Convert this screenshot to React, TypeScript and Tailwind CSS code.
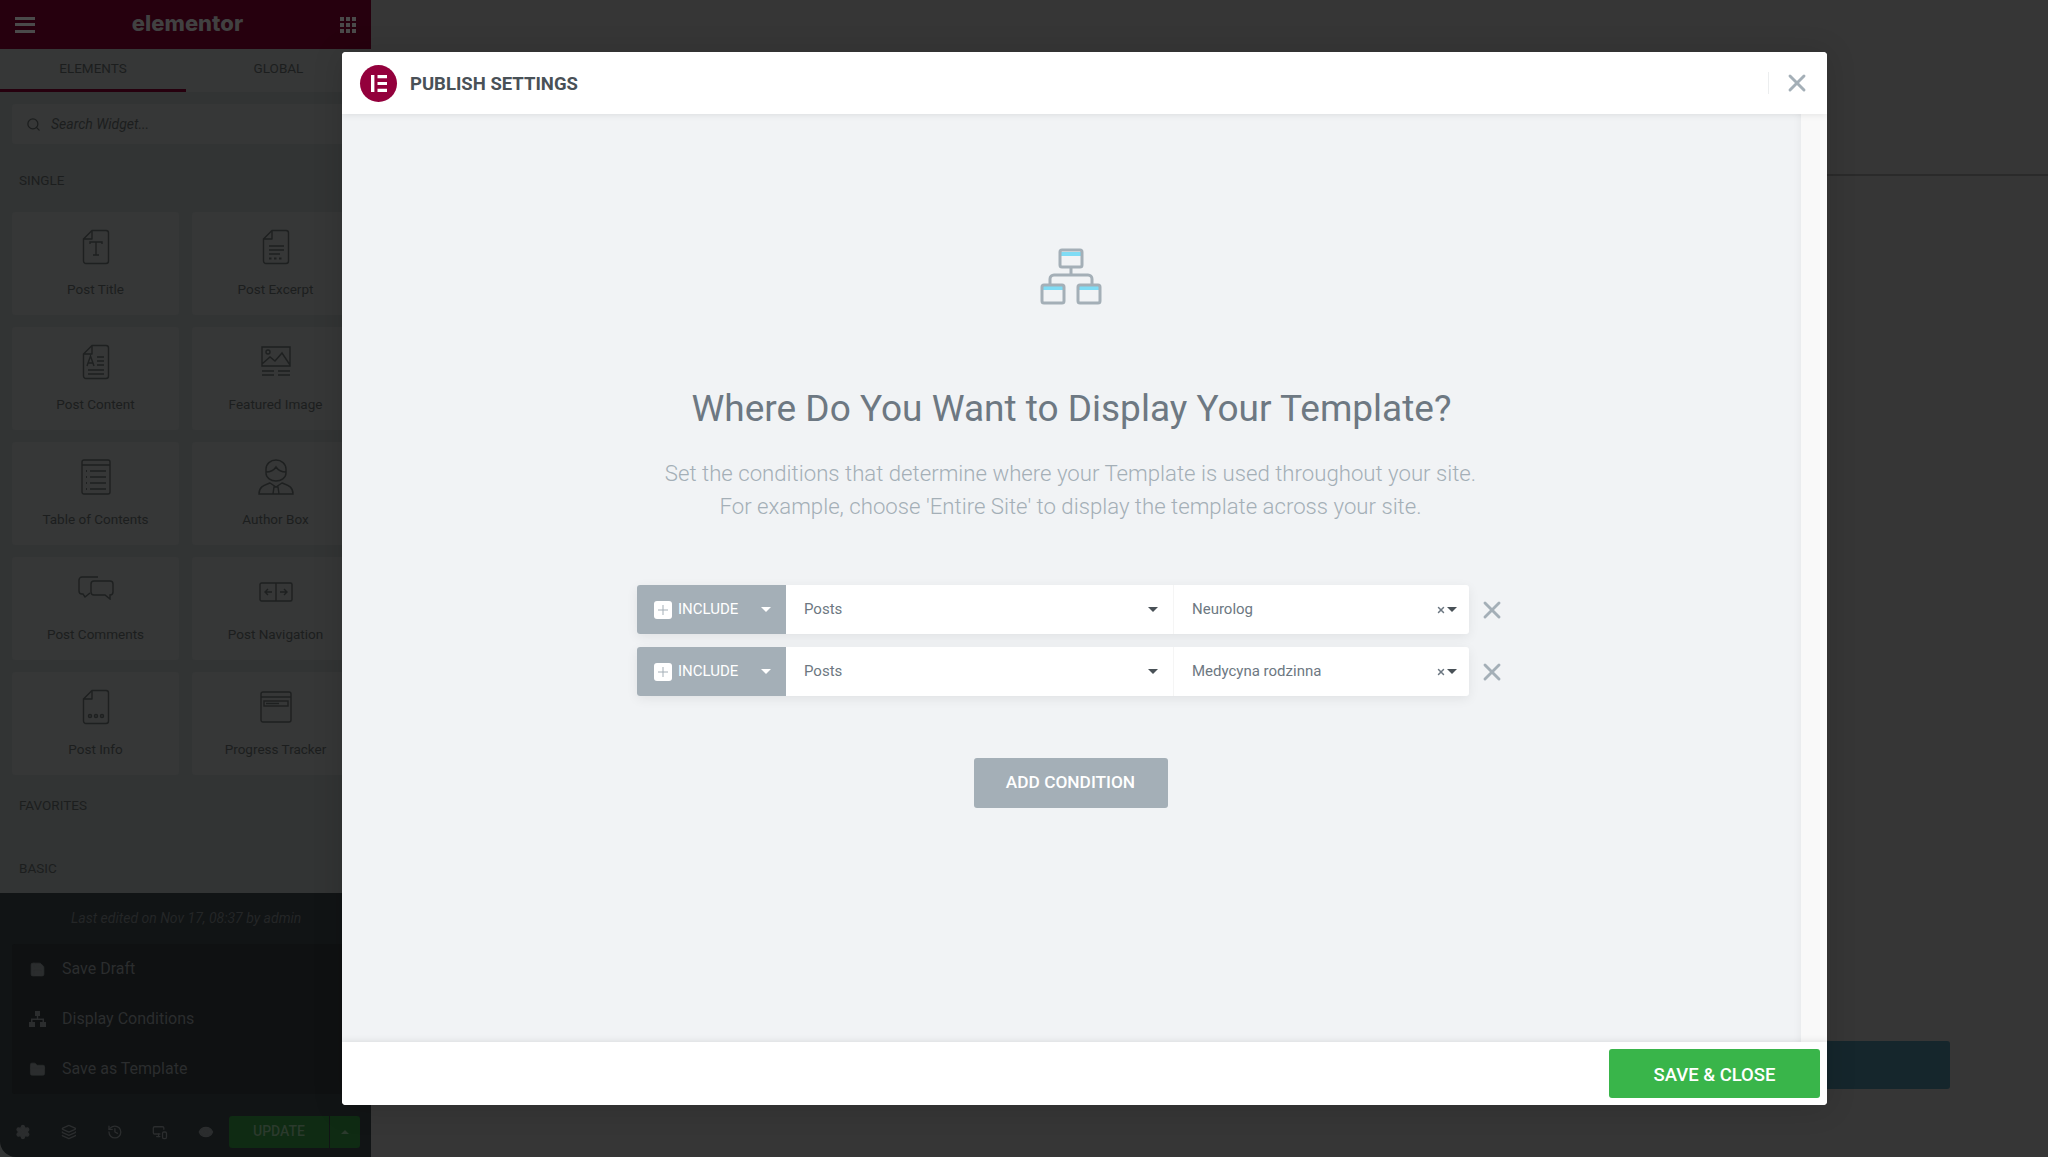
import React from 'react';
import { Eye, FolderClosed, History, Layers, MonitorSmartphone, Save, Search, Settings, X } from 'lucide-react';

const font = 'font-["Roboto",sans-serif]';

const FileShape = ({ children }: { children?: React.ReactNode }) => (
  <svg width="28" height="36" viewBox="0 0 28 36" fill="none" stroke="#1e2020" strokeWidth="1.4">
    <path d="M10 1.5h14a2.5 2.5 0 0 1 2.5 2.5v28a2.5 2.5 0 0 1-2.5 2.5H4A2.500 2.500 0 0 1 1.500 32V10zM10 1.500V10H1.500" strokeLinejoin="round" />
    {children}
  </svg>
);

const icons: Record<string, React.ReactNode> = {
  'Post Title': (
    <FileShape>
      <path d="M8 15v-2h12v2M14 13v13M11 26h6" />
    </FileShape>
  ),
  'Post Excerpt': (
    <FileShape>
      <path d="M7 17h15M7 21h15M7 25h11" />
      <path d="M7 29.500h2.500M12 29.500h2.500M17 29.500h2.500" strokeWidth="1.800" />
    </FileShape>
  ),
  'Post Content': (
    <FileShape>
      <path d="M5 22l3.500-10 3.500 10M6 19h5M15 13h7M15 17h7M15 21h7M6 26h16M6 30h16" />
    </FileShape>
  ),
  'Featured Image': (
    <svg width="30" height="32" viewBox="0 0 30 32" fill="none" stroke="#1e2020" strokeWidth="1.400">
      <path d="M1 1h28v19H1zM1 18l8-7 5 4 7-8 8 12" />
      <circle cx="7" cy="6" r="2" />
      <path d="M1 25h12M17 25h12M1 29h12M17 29h12" />
    </svg>
  ),
  'Table of Contents': (
    <svg width="30" height="36" viewBox="0 0 30 36" fill="none" stroke="#1e2020" strokeWidth="1.400">
      <rect x="1" y="1" width="28" height="34" rx="2" />
      <path d="M1 6h28M9 12h16M9 18h16M9 24h16M9 30h16" />
      <path d="M5 12h1M5 18h1M5 24h1M5 30h1" strokeWidth="2.200" />
    </svg>
  ),
  'Author Box': (
    <svg width="36" height="36" viewBox="0 0 36 36" fill="none" stroke="#1e2020" strokeWidth="1.400">
      <path d="M8 10a10 9 0 0 1 20 0v4c0 5-5 8-10 8s-10-3-10-8zM8 13c4 0 8-2 10-5 2 3 6 5 10 5" />
      <path d="M1 35c0-8 6-9 11-11l6 4 6-4c5 2 11 3 11 11zM16 28h4l1 7h-6z" />
    </svg>
  ),
  'Post Comments': (
    <svg width="36" height="24" viewBox="0 0 36 24" fill="none" stroke="#1e2020" strokeWidth="1.400" className="mb-[7px]">
      <path d="M20 1H4a3 3 0 0 0-3 3v11a3 3 0 0 0 3 3h1l2 3 5-4" />
      <path d="M16 5h16a3 3 0 0 1 3 3v8a3 3 0 0 1-3 3v4l-5-4H16a3 3 0 0 1-3-3V8a3 3 0 0 1 3-3z" />
    </svg>
  ),
  'Post Navigation': (
    <svg width="34" height="20" viewBox="0 0 34 20" fill="none" stroke="#1e2020" strokeWidth="1.400">
      <rect x="1" y="1" width="32" height="18" rx="1.500" />
      <path d="M17 1v18M13 10H6M9 7l-3 3 3 3M21 10h7M25 7l3 3-3 3" />
    </svg>
  ),
  'Post Info': (
    <FileShape>
      <circle cx="8" cy="27" r="1.500" />
      <circle cx="14" cy="27" r="1.500" />
      <circle cx="20" cy="27" r="1.500" />
    </FileShape>
  ),
  'Progress Tracker': (
    <svg width="32" height="32" viewBox="0 0 32 32" fill="none" stroke="#1e2020" strokeWidth="1.400">
      <rect x="1" y="1" width="30" height="30" rx="2" />
      <path d="M1 6h30" />
      <rect x="4" y="10" width="24" height="5" />
      <path d="M6 12.500h13" />
    </svg>
  ),
};

const widgets = [
  'Post Title',
  'Post Excerpt',
  'Post Content',
  'Featured Image',
  'Table of Contents',
  'Author Box',
  'Post Comments',
  'Post Navigation',
  'Post Info',
  'Progress Tracker',
];

function Sidebar() {
  return (
    <div className={`flex h-full w-[371px] shrink-0 flex-col bg-[#323434] ${font}`}>
      <div className="flex h-[49px] shrink-0 items-center justify-between bg-[#26000e] pl-[15px] pr-[15px]">
        <div className="flex w-[20px] flex-col gap-[3.500px]">
          <span className="h-[3px] bg-[#4a4a4a]" />
          <span className="h-[3px] bg-[#4a4a4a]" />
          <span className="h-[3px] bg-[#4a4a4a]" />
        </div>
        <span className='-mt-[2px] font-["Inter",sans-serif] text-[22px] font-extrabold text-[#414141]'>elementor</span>
        <div className="grid grid-cols-3 gap-[2px]">
          {Array.from({ length: 9 }).map((_, i) => (
            <span key={i} className="h-[4px] w-[4px] bg-[#4a4a4a]" />
          ))}
        </div>
      </div>
      <div className="flex h-[43px] shrink-0 bg-[#363737] text-[13.500px] text-[#1c1e1e]">
        <div className="flex w-[186px] items-center justify-center border-b-[3px] border-[#26000e] pb-[2px]">ELEMENTS</div>
        <div className="flex flex-1 items-center justify-center pb-[5px]">GLOBAL</div>
      </div>
      <div className="ml-[12px] mt-[12px] flex h-[40px] shrink-0 items-center gap-[10px] rounded-[3px] bg-[#363737] pl-[14px] text-[#1c1e1e]">
        <Search size={15} strokeWidth={2} />
        <span className="text-[14px] italic">Search Widget...</span>
      </div>
      <div className="ml-[19px] mt-[26px] text-[13.500px] leading-[20px] text-[#1c1e1e]">SINGLE</div>
      <div className="ml-[12px] mt-[22px] grid w-[347px] grid-cols-2 gap-x-[13px] gap-y-[12px]">
        {widgets.map((w) => (
          <div key={w} className="flex h-[103px] flex-col items-center rounded-[3px] bg-[#363737]">
            <div className="flex h-[69px] w-full items-center justify-center">{icons[w]}</div>
            <div className="-mt-[2px] text-[13.500px] leading-[20px] text-[#1c1e1e]">{w}</div>
          </div>
        ))}
      </div>
      <div className="ml-[19px] mt-[20px] text-[13.500px] leading-[20px] text-[#1c1e1e]">FAVORITES</div>
      <div className="ml-[19px] mt-[43px] text-[13.500px] leading-[20px] text-[#1c1e1e]">BASIC</div>
      <div className="mt-[15px] flex min-h-0 flex-1 flex-col rounded-bl-[16px] bg-[#111415]">
        <div className="pt-[15px] pl-[71px] text-[14px] italic leading-[20px] text-[#242627]">Last edited on Nov 17, 08:37 by admin</div>
        <div className="mx-[12px] mt-[16px] flex flex-col rounded-[3px] bg-[#0f1112] pl-[17px]">
          <div className="flex h-[50px] items-center gap-[16px] text-[16px] text-[#2b2d2e]">
            <Save size={17} fill="#2b2d2e" strokeWidth={1} />
            Save Draft
          </div>
          <div className="flex h-[50px] items-center gap-[16px] text-[16px] text-[#2b2d2e]">
            <svg width="17" height="16" viewBox="0 0 17 16" fill="#2b2d2e">
              <path d="M6 0h5v5H9.200v2.500H15V11h2v5h-6v-5h2.500V9H3.500v2H6v5H0v-5h2V7.500h5.800V5H6z" />
            </svg>
            Display Conditions
          </div>
          <div className="flex h-[50px] items-center gap-[16px] text-[16px] text-[#2b2d2e]">
            <FolderClosed size={17} fill="#2b2d2e" strokeWidth={1} />
            Save as Template
          </div>
        </div>
        <div className="mt-auto flex h-[50px] items-center pb-[1px] pl-[15px] pr-[11px] text-[#2b2d2e]">
          <Settings size={16} fill="#2b2d2e" />
          <Layers size={16} className="ml-[30px]" />
          <History size={16} className="ml-[30px]" />
          <MonitorSmartphone size={16} className="ml-[30px]" />
          <Eye size={16} fill="#2b2d2e" className="ml-[30px]" />
          <div className="ml-[15px] flex h-[32px] w-[100px] shrink-0 items-center justify-center rounded-l-[3px] bg-[#0f2b13] text-[14px] font-medium text-[#2b3a2d]">UPDATE</div>
          <div className="ml-[1px] flex h-[32px] w-[30px] shrink-0 items-center justify-center rounded-r-[3px] bg-[#0f2b13]">
            <span className="h-0 w-0 border-x-[4px] border-b-[4px] border-x-transparent border-b-[#2b3a2d]" />
          </div>
        </div>
      </div>
    </div>
  );
}

function ConditionRow({ value }: { value: string }) {
  return (
    <div className="flex h-[49px] w-[832px] rounded-[3px] bg-white text-[15px] text-[#6d7882] shadow-[0_3px_12px_rgba(0,0,0,0.07)]">
      <div className="flex w-[149px] shrink-0 items-center rounded-l-[3px] bg-[#a4afb7] pl-[17px] text-white">
        <span className="flex h-[18px] w-[18px] items-center justify-center rounded-[3px] bg-white">
          <svg width="10" height="10" viewBox="0 0 10 10" stroke="#a4afb7" strokeWidth="1">
            <path d="M5 0v10M0 5h10" />
          </svg>
        </span>
        <span className="ml-[6px]">INCLUDE</span>
        <span className="ml-[23px] h-0 w-0 border-x-[5px] border-t-[5px] border-x-transparent border-t-white" />
      </div>
      <div className="flex w-[388px] shrink-0 items-center justify-between border-r border-[#f5f5f5] pl-[18px] pr-[15px]">
        <span>Posts</span>
        <span className="h-0 w-0 border-x-[5px] border-t-[5px] border-x-transparent border-t-[#495157]" />
      </div>
      <div className="flex flex-1 items-center justify-between pl-[18px] pr-[12px]">
        <span>{value}</span>
        <span className="flex items-center gap-[1px]">
          <X size={10} strokeWidth={3.500} className="text-[#6d7882]" />
          <span className="h-0 w-0 border-x-[5px] border-t-[5px] border-x-transparent border-t-[#495157]" />
        </span>
      </div>
    </div>
  );
}

function ConditionsIcon() {
  return (
    <svg width="62" height="58" viewBox="0 0 62 58" fill="none" className="-ml-[2px]">
      <path d="M31 21v7M10 38v-6a4 4 0 0 1 4-4h34a4 4 0 0 1 4 4v6" stroke="#a4afb7" strokeWidth="3" />
      <path d="M20 5h22v4H20zM2 39h22v4H2zM38 39h22v4H38z" fill="#7fdcf5" />
      <rect x="20" y="3" width="22" height="17" rx="2" stroke="#a4afb7" strokeWidth="3" />
      <rect x="2" y="38" width="22" height="18" rx="2" stroke="#a4afb7" strokeWidth="3" />
      <rect x="38" y="38" width="22" height="18" rx="2" stroke="#a4afb7" strokeWidth="3" />
    </svg>
  );
}

function PublishModal() {
  return (
    <div className={`absolute left-[342px] top-[52px] flex h-[1053px] w-[1485px] flex-col overflow-hidden rounded-[4px] bg-white shadow-[0_2px_30px_rgba(0,0,0,0.15)] ${font}`}>
      <div className="z-10 flex h-[62px] shrink-0 items-center bg-white pl-[18px] pr-[16px] shadow-[0_2px_6px_rgba(0,0,0,0.07)]">
        <span className="flex h-[37px] w-[37px] items-center justify-center rounded-full bg-[#93003c]">
          <svg width="16" height="17" viewBox="0 0 16 17" fill="white">
            <path d="M0 0h3.400v17H0zM6.500 0H16v3.200H6.500zM6.500 6.900H16v3.200H6.500zM6.500 13.800H16V17H6.500z" />
          </svg>
        </span>
        <span className="ml-[13px] mt-[3px] text-[18.500px] font-bold text-[#495157]">PUBLISH SETTINGS</span>
        <span className="ml-auto h-[22px] w-px bg-[#eceeef]" />
        <X size={28} strokeWidth={2.500} className="ml-[14px] text-[#a4afb7]" />
      </div>
      <div className="flex min-h-0 flex-1">
        <div className="flex flex-1 flex-col items-center bg-[#f1f3f5] pt-[133px] shadow-[inset_-6px_0_10px_-6px_rgba(0,0,0,0.06)]">
          <ConditionsIcon />
          <h1 className="mt-[81px] text-[37px] font-[450] leading-[46px] text-[#6d7882]">Where Do You Want to Display Your Template?</h1>
          <p className="-ml-[2px] mt-[25px] text-center text-[22.200px] font-light leading-[33px] text-[#a4afb7]">
            Set the conditions that determine where your Template is used throughout your site.
            <br />
            For example, choose 'Entire Site' to display the template across your site.
          </p>
          <div className="ml-[2px] mt-[62px] flex flex-col gap-[13px]">
            {['Neurolog', 'Medycyna rodzinna'].map((value) => (
              <div key={value} className="flex items-center gap-[9px]">
                <ConditionRow value={value} />
                <X size={28} strokeWidth={2.500} className="mr-[2px] text-[#a4afb7]" />
              </div>
            ))}
          </div>
          <button className="-ml-[2px] mt-[62px] h-[50px] w-[194px] rounded-[3px] bg-[#a4afb7] text-[17.300px] font-medium text-white">ADD CONDITION</button>
        </div>
        <div className="w-[26px] shrink-0 bg-[#f9f9f9]" />
      </div>
      <div className="z-10 flex h-[63px] shrink-0 items-start justify-end bg-white pr-[7px] pt-[7px] shadow-[0_-2px_6px_rgba(0,0,0,0.07)]">
        <button className="h-[49px] w-[211px] rounded-[3px] bg-[#39b54a] pt-[4px] text-[18.500px] font-medium text-white">SAVE &amp; CLOSE</button>
      </div>
    </div>
  );
}

export default function App() {
  return (
    <div className="relative flex h-[1157px] w-[2048px] overflow-hidden bg-[#a000a0]">
      <Sidebar />
      <div className="flex flex-1 flex-col bg-[#363636]">
        <div className="h-[176px] shrink-0 border-b-2 border-[#2a2a2a]" />
        <div className="ml-auto mr-[98px] mt-[865px] h-[48px] w-[200px] rounded-[3px] bg-[#15262c]" />
      </div>
      <PublishModal />
    </div>
  );
}
